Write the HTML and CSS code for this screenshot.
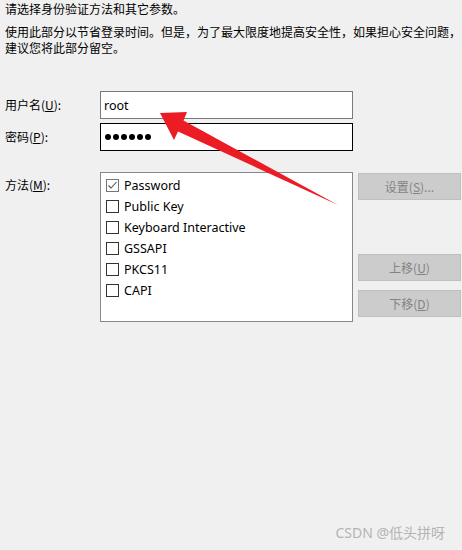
FILE: index.html
```html
<!DOCTYPE html>
<html lang="zh-CN">
<head>
<meta charset="utf-8">
<title>身份验证</title>
<link rel="stylesheet" href="styles.css">
</head>
<body>
<div class="page">
  <p class="intro first">请选择身份验证方法和其它参数。</p>
  <p class="intro">使用此部分以节省登录时间。但是，为了最大限度地提高安全性，如果担心安全问题，建议您将此部分留空。</p>

  <div class="fields">
    <label class="lbl">用户名(<u>U</u>):</label>
    <div class="input user">root</div>
    <label class="lbl">密码(<u>P</u>):</label>
    <div class="input pass focus"><span class="dot"></span><span class="dot"></span><span class="dot"></span><span class="dot"></span><span class="dot"></span><span class="dot"></span></div>
  </div>

  <div class="methods">
    <label class="lbl top">方法(<u>M</u>):</label>
    <div class="listbox">
      <div class="item"><span class="cb checked"><svg width="11" height="11" viewBox="0 0 11 11"><polyline points="1.5,5.5 4,8 9.5,2" fill="none" stroke="#555" stroke-width="1.1"/></svg></span>Password</div>
      <div class="item"><span class="cb"></span>Public Key</div>
      <div class="item"><span class="cb"></span>Keyboard Interactive</div>
      <div class="item"><span class="cb"></span>GSSAPI</div>
      <div class="item"><span class="cb"></span>PKCS11</div>
      <div class="item"><span class="cb"></span>CAPI</div>
    </div>
    <div class="buttons">
      <div class="btn">设置(<u>S</u>)...</div>
      <div class="btn up">上移(<u>U</u>)</div>
      <div class="btn">下移(<u>D</u>)</div>
    </div>
  </div>

  <svg class="arrow" width="462" height="550" viewBox="0 0 462 550">
    <polygon points="160,113 187,112 183.5,120.5 338,205 178,131.5 174,140" fill="#ec1c24"/>
  </svg>

  <div class="watermark">CSDN @低头拼呀</div>
</div>
</body>
</html>
```

FILE: styles.css
```css
html, body {
  margin: 0;
  padding: 0;
  background: #f0f0f0;
}
.page {
  position: relative;
  width: 462px;
  height: 550px;
  font-family: "Noto Sans", "Noto Sans CJK SC", sans-serif;
  font-size: 12px;
  color: #000;
}
.intro {
  margin: 0;
  padding: 0 0 0 5px;
  line-height: 16px;
  font-family: "Noto Sans CJK SC", sans-serif;
  line-break: anywhere;
}
.intro.first {
  padding-top: 1px;
  margin-bottom: 7px;
}
.fields {
  display: grid;
  grid-template-columns: 95px 253px;
  row-gap: 4px;
  padding: 35px 0 0 5px;
  align-items: center;
}
.lbl {
  font-family: "Noto Sans CJK SC", sans-serif;
  line-height: 16px;
}
.input {
  box-sizing: border-box;
  height: 28px;
  background: #fff;
  border: 1px solid #7a7a7a;
  display: flex;
  align-items: center;
  padding-left: 3px;
  font-size: 12.5px;
}
.input.focus {
  border-color: #000;
}
.dot {
  width: 6px;
  height: 6px;
  border-radius: 50%;
  background: #000;
  margin-left: 1px;
  margin-right: 1px;
}
.methods {
  display: flex;
  padding: 21px 0 0 5px;
}
.lbl.top {
  width: 95px;
  padding-top: 5px;
}
.listbox {
  box-sizing: border-box;
  width: 253px;
  height: 150px;
  background: #fff;
  border: 1px solid #828790;
  padding: 2px 0 0 5px;
}
.item {
  display: flex;
  align-items: center;
  height: 21px;
  font-size: 12.5px;
}
.cb {
  box-sizing: border-box;
  width: 13px;
  height: 13px;
  border: 1px solid #333;
  background: #fff;
  margin-right: 5px;
  display: flex;
  align-items: center;
  justify-content: center;
}
.cb.checked {
  border-color: #777;
}
.buttons {
  display: flex;
  flex-direction: column;
  margin-left: 5px;
  padding-top: 1px;
}
.btn {
  box-sizing: border-box;
  width: 103px;
  height: 27px;
  background: #cccccc;
  border: 1px solid #bfbfbf;
  color: #838383;
  display: flex;
  align-items: center;
  justify-content: center;
  font-family: "Noto Sans CJK SC", sans-serif;
  margin-bottom: 9px;
}
.btn.up {
  margin-top: 45px;
}
.arrow {
  position: absolute;
  left: 0;
  top: 0;
  pointer-events: none;
}
.watermark {
  position: absolute;
  right: 17px;
  bottom: 8px;
  font-family: "Noto Sans", "Noto Sans CJK SC", sans-serif;
  font-size: 14px;
  color: #b4b4b4;
}
```
